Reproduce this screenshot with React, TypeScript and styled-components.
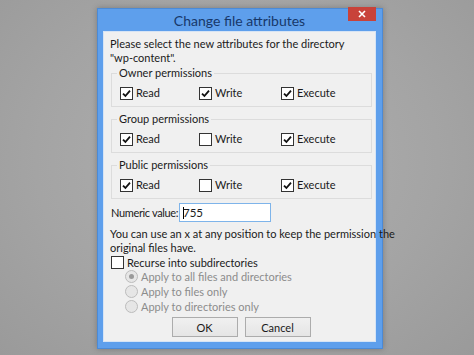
import React from "react";
import styled, { createGlobalStyle } from "styled-components";

const Global = createGlobalStyle`
  html, body { margin: 0; padding: 0; }
  body {
    width: 474px;
    height: 355px;
    overflow: hidden;
    background: radial-gradient(ellipse at 50% 45%, #b0b0b0 0%, #a4a4a4 60%, #9a9a9a 100%);
    font-family: Lato, "Noto Sans", sans-serif;
    font-size: 11px;
    color: #1a1a1a;
    white-space: nowrap;
  }
`;

const Page = styled.div`
  padding: 8px 0 0 97px;
`;

const Window = styled.div`
  width: 286px;
  box-sizing: border-box;
  background: #5e9fec;
  border: 1px solid #4b8ad6;
  padding: 0 6px 6px 5px;
  box-shadow: 0 0 6px rgba(0, 0, 0, 0.25);
`;

const TitleBar = styled.div`
  height: 22px;
  display: grid;
  grid-template-columns: 1fr auto 1fr;
  align-items: center;
`;

const Title = styled.div`
  grid-column: 2;
  font-size: 14px;
  color: #17386a;
  padding-top: 1px;
`;

const CloseButton = styled.div`
  grid-column: 3;
  justify-self: end;
  align-self: start;
  margin-top: -2px;
  width: 28px;
  height: 14px;
  background: #c8423a;
  display: flex;
  align-items: center;
  justify-content: center;
`;

const Client = styled.div`
  background: #f0f0f0;
  border: 1px solid #d6e4f5;
  padding: 5px 3px 4px 6px;
  display: flex;
  flex-direction: column;
`;

const Text = styled.div<{ $mt?: number }>`
  line-height: 14px;
  margin-top: ${(p) => p.$mt ?? 0}px;
`;

const Group = styled.fieldset<{ $mt?: number }>`
  margin: ${(p) => p.$mt ?? 0}px 0 0 1px;
  padding: 6px 0 6px 8px;
  border: 1px solid #dcdcdc;
  border-radius: 0;
  min-width: 0;
`;

const Legend = styled.legend`
  padding: 0 2px;
  margin-left: -3px;
  line-height: 14px;
`;

const CheckRow = styled.div`
  display: grid;
  grid-template-columns: 79px 82px auto;
  height: 14px;
  align-items: center;
`;

const CheckItem = styled.label`
  display: flex;
  align-items: center;
  gap: 3px;
  line-height: 14px;
`;

const Box = styled.span`
  width: 11px;
  height: 11px;
  border: 1px solid #333;
  background: #fff;
  display: flex;
  align-items: center;
  justify-content: center;
  flex: none;
`;

const NumericRow = styled.div`
  display: flex;
  align-items: center;
  margin-top: 4px;
  padding-left: 1px;
  height: 19px;
`;

const NumericLabel = styled.span`
  width: 68px;
  flex: none;
  letter-spacing: -0.35px;
`;

const Input = styled.div`
  width: 87px;
  height: 17px;
  border: 1px solid #7eb4ea;
  background: #fff;
  display: flex;
  align-items: center;
  padding-left: 3px;
  box-sizing: content-box;
  font-size: 11.5px;
`;

const Caret = styled.span`
  width: 1px;
  height: 12px;
  background: #000;
  margin-right: -1px;
`;

const RecurseRow = styled.div`
  display: flex;
  align-items: center;
  gap: 3px;
  height: 14px;
  padding-left: 1px;
`;

const RadioRow = styled.div`
  display: flex;
  align-items: center;
  gap: 3px;
  height: 15px;
  padding-left: 15px;
  color: #8c8c8c;
`;

const Radio = styled.span<{ $on?: boolean }>`
  width: 11px;
  height: 11px;
  border-radius: 50%;
  border: 1px solid #bcbcbc;
  background: #e6e6e6;
  display: flex;
  align-items: center;
  justify-content: center;
  &::after {
    content: "";
    display: ${(p) => (p.$on ? "block" : "none")};
    width: 5px;
    height: 5px;
    border-radius: 50%;
    background: #9a9a9a;
  }
`;

const ButtonRow = styled.div`
  display: flex;
  justify-content: center;
  gap: 7px;
  margin-top: 3px;
`;

const Button = styled.div`
  width: 64px;
  height: 18px;
  border: 1px solid #acacac;
  background: linear-gradient(#f0f0f0, #e5e5e5);
  display: flex;
  align-items: center;
  justify-content: center;
`;

const Check = () => (
  <svg width="9" height="9" viewBox="0 0 9 9">
    <path d="M1 4.6 L3.4 7 L8 1.6" fill="none" stroke="#111" strokeWidth="1.8" />
  </svg>
);

const CheckBox = ({ on, label }: { on: boolean; label: string }) => (
  <CheckItem>
    <Box>{on && <Check />}</Box>
    {label}
  </CheckItem>
);

const groups = [
  { name: "Owner permissions", perms: [true, true, true] },
  { name: "Group permissions", perms: [true, false, true] },
  { name: "Public permissions", perms: [true, false, true] },
];

export default function App() {
  return (
    <>
      <Global />
      <Page>
        <Window>
          <TitleBar>
            <Title>Change file attributes</Title>
            <CloseButton>
              <svg width="8" height="8" viewBox="0 0 8 8">
                <path d="M1 1 L7 7 M7 1 L1 7" stroke="#fff" strokeWidth="1.6" />
              </svg>
            </CloseButton>
          </TitleBar>
          <Client>
            <Text>
              Please select the new attributes for the directory
              <br />
              "wp-content".
            </Text>
            {groups.map((g, i) => (
              <Group key={g.name} $mt={i === 0 ? 1 : 5}>
                <Legend>{g.name}</Legend>
                <CheckRow>
                  <CheckBox on={g.perms[0]} label="Read" />
                  <CheckBox on={g.perms[1]} label="Write" />
                  <CheckBox on={g.perms[2]} label="Execute" />
                </CheckRow>
              </Group>
            ))}
            <NumericRow>
              <NumericLabel>Numeric value:</NumericLabel>
              <Input>
                <Caret />
                755
              </Input>
            </NumericRow>
            <Text $mt={5}>
              You can use an x at any position to keep the permission the
              <br />
              original files have.
            </Text>
            <RecurseRow>
              <Box />
              Recurse into subdirectories
            </RecurseRow>
            <RadioRow>
              <Radio $on />
              Apply to all files and directories
            </RadioRow>
            <RadioRow>
              <Radio />
              Apply to files only
            </RadioRow>
            <RadioRow>
              <Radio />
              Apply to directories only
            </RadioRow>
            <ButtonRow>
              <Button>OK</Button>
              <Button>Cancel</Button>
            </ButtonRow>
          </Client>
        </Window>
      </Page>
    </>
  );
}
